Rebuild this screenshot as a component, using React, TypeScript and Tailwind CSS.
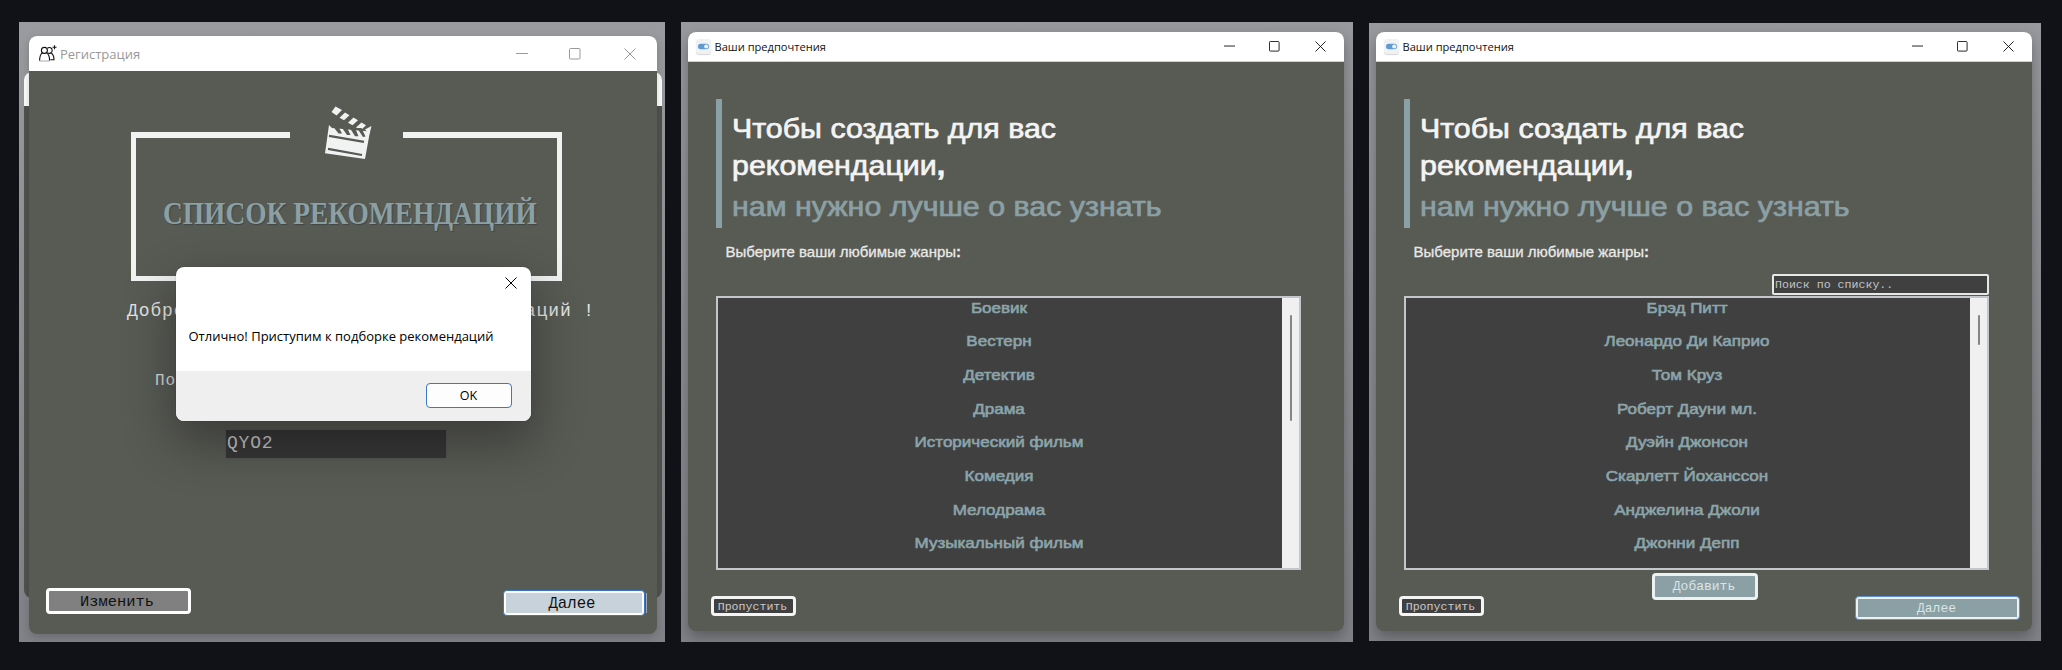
import type { ReactNode } from 'react';

const genres = ['Боевик', 'Вестерн', 'Детектив', 'Драма', 'Исторический фильм', 'Комедия', 'Мелодрама', 'Музыкальный фильм'];
const actors = ['Брэд Питт', 'Леонардо Ди Каприо', 'Том Круз', 'Роберт Дауни мл.', 'Дуэйн Джонсон', 'Скарлетт Йоханссон', 'Анджелина Джоли', 'Джонни Депп'];

function Minimize({ className }: { className: string }) {
  return (
    <svg className={className} width="12" height="12" viewBox="0 0 12 12" stroke="currentColor" fill="none">
      <path d="M0 5.5H12" />
    </svg>
  );
}

function Maximize({ className }: { className: string }) {
  return (
    <svg className={className} width="12" height="12" viewBox="0 0 12 12" stroke="currentColor" fill="none">
      <rect x="0.5" y="0.5" width="10.5" height="10.5" rx="1" />
    </svg>
  );
}

function Close({ className }: { className: string }) {
  return (
    <svg className={className} width="12" height="12" viewBox="0 0 12 12" stroke="currentColor" fill="none">
      <path d="M0.5 0.5L11.5 11.5M11.5 0.5L0.5 11.5" />
    </svg>
  );
}

function PeopleIcon() {
  return (
    <svg width="18" height="18" viewBox="0 0 18 18" fill="none" stroke="#111" strokeWidth="1.1">
      <path d="M8.4 5.4a3 3 0 1 1-6 0a3 3 0 0 1 6 0z" />
      <path d="M3.6 7.6C1.2 9.2.6 11 .6 15.8M7.6 7.6c2.3 1.6 3 3.4 3 8.2" />
      <path d="M.6 16h10" stroke="#aaa" />
      <path d="M8.4 3.2c2-1.6 5-.2 4.8 2.4c0 2.4-2.9 3.6-4.6 2.2M12.4 8.2c2 1.2 2.6 3.2 2.6 6.6h-3.6" />
      <path d="M15.5 0.2v4M13.5 2.2h4" />
    </svg>
  );
}

function ToggleIcon() {
  return (
    <span className="flex h-[15px] w-[15px] items-center justify-center rounded-[3px] bg-[#f0f1f3] shadow-[0_1px_1px_#d4d6da]">
      <svg width="11" height="7" viewBox="0 0 11 7">
        <rect x="0" y="0.8" width="11" height="5.4" rx="2.7" fill="#5d9bd0" />
        <circle cx="8.2" cy="3.5" r="2.1" fill="#e9f2fa" />
      </svg>
    </span>
  );
}

function Clapper() {
  return (
    <svg className="absolute left-[193px] top-[-26px]" width="49" height="55" viewBox="0 0 49 55">
      <path d="M5 19L8 22L46 25.5L41 53L1 47.2Z" fill="#f1f3f2" />
      <g fill="#f1f3f2">
        <path d="M11.5 .5L18 4L12.5 9.5L7.5 6z" />
        <path d="M21 6.5l4.5 2.8l-5.5 5l-4.5-2.6z" />
        <path d="M29.5 11.5l4.5 2.8l-5.5 5l-4.5-2.6z" />
        <path d="M37.5 16.5l4.5 2.8l-5 4.7l-5-2.5z" />
        <path d="M41 23.5l6.5-3.5l-2 8z" />
      </g>
      <g fill="#585a54">
        <path d="M8 19h5.5l4.5 8.5h-3.5z" />
        <path d="M16.5 19.5h5.5l4.5 9.5h-3.5z" />
        <path d="M25 20.5h5.5l4 9.8h-3.5z" />
        <path d="M33 22h4.500l4 8.500l-2.500 .5z" />
      </g>
      <path d="M5 29.8L40 35.8M4 42.8L38 49" stroke="#585a54" strokeWidth="2.2" fill="none" />
    </svg>
  );
}

function Field({ className, children }: { className: string; children: ReactNode }) {
  return <div className={'box-border shrink-0 whitespace-nowrap font-["Liberation_Mono",monospace] ' + className}>{children}</div>;
}

function RegistrationFrame() {
  return (
    <section className="relative mt-[22px] ml-[19px] h-[620px] w-[646px] shrink-0 overflow-hidden bg-gradient-to-b from-[#9a9b9f] to-[#818287] pt-[14px] pl-[10px]">
      <div className="absolute top-[50px] left-[5px] h-[526px] w-[638px] overflow-hidden rounded-[8px] bg-[#51534e]">
        <div className="h-[34px] bg-white" />
      </div>
      <div className="relative flex h-[598px] w-[628px] flex-col overflow-hidden rounded-[8px] bg-[#585a54] shadow-[0_3px_10px_rgba(0,0,0,0.18)]">
        <header className="flex h-[35px] shrink-0 items-center bg-white pl-[10px] text-[#999]">
          <PeopleIcon />
          <span className='ml-[3px] font-["Open_Sans",sans-serif] text-[13px] leading-[18px]'>Регистрация</span>
          <Minimize className="ml-auto" />
          <Maximize className="ml-[41px]" />
          <Close className="mr-[21px] ml-[43px]" />
        </header>

        <div className="relative mt-[61px] ml-[102px] h-[149px] w-[431px] shrink-0">
          <div className="flex h-[6px] justify-between">
            <div className="w-[159px] bg-[#f1f3f2]" />
            <div className="w-[159px] bg-[#f1f3f2]" />
          </div>
          <div className="h-[143px] border-x-[5.5px] border-b-[5.5px] border-[#f1f3f2] pt-[56px] pl-[27px]">
            <h1 className='origin-left scale-x-[0.884] font-["Liberation_Serif",serif] text-[31px] leading-[40px] font-bold whitespace-nowrap text-[#8ba0a5] [text-shadow:1px_1px_1px_rgba(40,52,56,0.5)]'>
              СПИСОК РЕКОМЕНДАЦИЙ
            </h1>
          </div>
          <Clapper />
        </div>

        <p className='mt-[18px] ml-[98px] h-[24px] shrink-0 font-["Liberation_Mono",monospace] text-[18px] leading-[24px] tracking-[0.9px] whitespace-nowrap text-[#e4e5e3]'>
          Добро пожаловать в список рекомендаций !
        </p>
        <p className='mt-[46px] ml-[126px] h-[24px] shrink-0 font-["Liberation_Mono",monospace] text-[16px] leading-[24px] tracking-[0.9px] text-[#d8d9d7]'>По</p>

        <Field className="mt-[36px] ml-[196px] h-[30px] w-[222px] border border-[#555653] bg-[#373737] pl-px text-[18px] leading-[26px] tracking-[0.8px] text-[#c4c4c4]">
          QYO2
        </Field>

        <footer className="mt-[129px] flex items-start">
          <Field className="ml-[16.5px] h-[26px] w-[145px] rounded-[4px] border-[3px] border-white bg-[#808080] pr-[2px] text-center text-[15.4px] leading-[22px] text-[#111]">
            Изменить
          </Field>
          <Field className="mt-[2px] ml-auto h-[26px] w-[142px] rounded-[4px] border border-[#3a76c8] bg-white p-[2px] text-[#111]">
            <div className="h-[20px] bg-[#c8d2da] pr-[3px] text-center text-[15.7px] leading-[22px]">Далее</div>
          </Field>
          <div className="mt-[5px] mr-[10px] ml-px h-[20px] w-[1.5px] bg-[#a8a9a6]" />
        </footer>
      </div>

      <div className="absolute top-[245px] left-[156.5px] flex h-[154px] w-[355px] flex-col overflow-hidden rounded-[8px] bg-white shadow-[0_0_1px_rgba(0,0,0,0.6),0_20px_50px_4px_rgba(0,0,0,0.32)]">
        <Close className="mt-[10px] mr-[14px] shrink-0 self-end text-black" />
        <p className='mt-[37px] ml-[13px] font-["Open_Sans",sans-serif] text-[13px] leading-[20px] whitespace-nowrap text-black'>
          Отлично! Приступим к подборке рекомендаций
        </p>
        <div className="mt-auto flex h-[50px] shrink-0 justify-end bg-[#efefef] pt-[12px] pr-[19px]">
          <button className='h-[25px] w-[86px] rounded-[4px] border-[1.5px] border-[#3a78c8] bg-[#fdfdfd] font-["Open_Sans",sans-serif] text-[12.5px] leading-[23px] text-black'>
            OK
          </button>
        </div>
      </div>
    </section>
  );
}

function PreferencesWindow({ items, thumb, search, footer }: { items: string[]; thumb: string; search?: boolean; footer: ReactNode }) {
  return (
    <div className="flex h-[599px] w-[656px] flex-col overflow-hidden rounded-[8px] bg-[#585a54] shadow-[0_6px_14px_rgba(0,0,0,0.3)]">
      <header className="flex h-[30px] shrink-0 items-center border-b border-[#cfd1cd] bg-white pl-[8px] text-[#111]">
        <ToggleIcon />
        <span className='ml-[3.5px] font-["Open_Sans",sans-serif] text-[11.1px] leading-[18px]'>Ваши предпочтения</span>
        <Minimize className="ml-auto h-[11px] w-[11px]" />
        <Maximize className="ml-[34px] h-[11px] w-[11px]" />
        <Close className="mr-[18px] ml-[35px] h-[11px] w-[11px]" />
      </header>
      <div className='mt-[37px] ml-[27.5px] h-[129px] shrink-0 border-l-[6px] border-[#8ba0a5] pt-[12px] pl-[10.5px] font-["Liberation_Sans",sans-serif] text-[27px] leading-[37px] whitespace-nowrap text-[#f3f4f3] [-webkit-text-stroke:0.7px_currentColor]'>
        <div className="origin-left scale-x-[1.125]">
          <p>Чтобы создать для вас</p>
          <p>рекомендации<b>,</b></p>
          <p className="mt-[4px] text-[#8ba0a5]">нам нужно лучше о вас узнать</p>
        </div>
      </div>
      <p className='mt-[14px] ml-[37.5px] h-[20px] shrink-0 font-["Liberation_Sans",sans-serif] text-[15px] leading-[20px] text-[#e8e9e7] [-webkit-text-stroke:0.3px_currentColor]'>
        Выберите ваши любимые жанры<b>:</b>
      </p>
      <div className="mr-[43px] flex h-[34px] shrink-0 items-end justify-end pb-px">
        {search && (
          <Field className="h-[21px] w-[217px] rounded-[2px] border-2 border-[#e6e8e8] bg-[#404040] pl-px text-[11.6px] leading-[18px] text-[#c2c2c2]">
            Поиск по списку..
          </Field>
        )}
      </div>
      <div className="ml-[28px] flex h-[274px] w-[585px] shrink-0 overflow-hidden border-2 border-[#c3c6ca] bg-[#404040]">
        <ul className='mt-[-7.5px] flex-1 pr-[2px] text-center font-["Liberation_Sans",sans-serif] text-[15px] leading-[33.7px] text-[#8ba5ab] [-webkit-text-stroke:0.6px_currentColor]'>
          {items.map((name) => (
            <li key={name} className="scale-x-[1.135]">{name}</li>
          ))}
        </ul>
        <div className="flex w-[17px] justify-center bg-[#f0f0f0] pt-[17px]">
          <div className={'w-[2px] rounded bg-[#858585] ' + thumb} />
        </div>
      </div>
      <footer className="flex items-start">
        <Field className="mt-[25.5px] ml-[23px] h-[20px] w-[85px] rounded-[4px] border-[3px] border-[#f4f4f4] bg-[#404040] pr-[2px] text-center text-[11.6px] leading-[15px] text-[#c8c8c8]">
          Пропустить
        </Field>
        {footer}
      </footer>
    </div>
  );
}

export default function App() {
  return (
    <main className="flex h-[670px] w-[2062px] items-start overflow-hidden bg-[#101217]">
      <RegistrationFrame />
      <section className="mt-[22px] ml-[16px] h-[620px] w-[672px] shrink-0 overflow-hidden bg-gradient-to-b from-[#98999d] to-[#818287] pt-[10px] pl-[7px]">
        <PreferencesWindow items={genres} thumb="h-[106px]" footer={null} />
      </section>
      <section className="mt-[23px] ml-[16px] h-[618px] w-[672px] shrink-0 overflow-hidden bg-gradient-to-b from-[#98999d] to-[#818287] pt-[9px] pl-[7px]">
        <PreferencesWindow
          items={actors}
          thumb="h-[30px]"
          search
          footer={
            <>
              <Field className="mt-[3px] ml-[168px] h-[27px] w-[106px] rounded-[4px] border-[3px] border-[#eef1f1] bg-[#8ba0a5] pr-[2px] text-center text-[13px] leading-[22px] text-[#dde4e4]">
                Добавить
              </Field>
              <Field className="mt-[26px] ml-[97px] h-[24px] w-[165px] rounded-[4px] border border-[#5b8fd6] bg-[#eef1f1] p-[2px] text-[#dde4e4]">
                <div className="h-[18px] bg-[#8ba0a5] pr-[2px] text-center text-[13px] leading-[20px]">Далее</div>
              </Field>
            </>
          }
        />
      </section>
    </main>
  );
}
